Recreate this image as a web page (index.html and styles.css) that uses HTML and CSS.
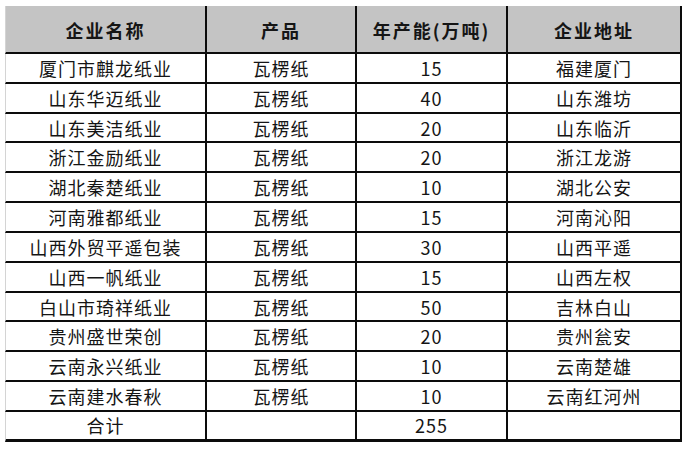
FILE: index.html
```html
<!DOCTYPE html>
<html lang="zh-CN">
<head>
<meta charset="utf-8">
<link rel="stylesheet" href="styles.css">
</head>
<body>
<table class="sheet">
  <colgroup>
    <col class="c1"><col class="c2"><col class="c3"><col class="c4">
  </colgroup>
  <thead>
    <tr class="head">
      <th>企业名称</th><th>产品</th><th>年产能(万吨)</th><th>企业地址</th>
    </tr>
  </thead>
  <tbody>
    <tr><td>厦门市麒龙纸业</td><td>瓦楞纸</td><td class="num">15</td><td>福建厦门</td></tr>
    <tr><td>山东华迈纸业</td><td>瓦楞纸</td><td class="num">40</td><td>山东潍坊</td></tr>
    <tr><td>山东美洁纸业</td><td>瓦楞纸</td><td class="num">20</td><td>山东临沂</td></tr>
    <tr><td>浙江金励纸业</td><td>瓦楞纸</td><td class="num">20</td><td>浙江龙游</td></tr>
    <tr><td>湖北秦楚纸业</td><td>瓦楞纸</td><td class="num">10</td><td>湖北公安</td></tr>
    <tr><td>河南雅都纸业</td><td>瓦楞纸</td><td class="num">15</td><td>河南沁阳</td></tr>
    <tr><td>山西外贸平遥包装</td><td>瓦楞纸</td><td class="num">30</td><td>山西平遥</td></tr>
    <tr><td>山西一帆纸业</td><td>瓦楞纸</td><td class="num">15</td><td>山西左权</td></tr>
    <tr><td>白山市琦祥纸业</td><td>瓦楞纸</td><td class="num">50</td><td>吉林白山</td></tr>
    <tr><td>贵州盛世荣创</td><td>瓦楞纸</td><td class="num">20</td><td>贵州瓮安</td></tr>
    <tr><td>云南永兴纸业</td><td>瓦楞纸</td><td class="num">10</td><td>云南楚雄</td></tr>
    <tr><td>云南建水春秋</td><td>瓦楞纸</td><td class="num">10</td><td>云南红河州</td></tr>
    <tr class="total"><td>合计</td><td></td><td class="num">255</td><td></td></tr>
  </tbody>
</table>
</body>
</html>
```

FILE: styles.css
```css
html, body {
  margin: 0;
  padding: 0;
  background: #ffffff;
}

body {
  padding: 6px 0 0 5px;
  font-family: "Noto Sans CJK SC", "Noto Sans", sans-serif;
  color: #151515;
}

.sheet {
  border-collapse: separate;
  border-spacing: 0;
  table-layout: fixed;
  width: 677px;
}

.c1 { width: 202px; }
.c2 { width: 150px; }
.c3 { width: 151px; }
.c4 { width: 174px; }

.sheet th,
.sheet td {
  box-sizing: border-box;
  padding: 0;
  text-align: center;
  vertical-align: middle;
  border-right: 2px solid #0c0c0c;
  border-bottom: 2px solid #0c0c0c;
  white-space: nowrap;
  overflow: hidden;
}

.sheet th:first-child,
.sheet td:first-child {
  border-left: 1px solid #d4d4d4;
}

.head th {
  height: 48px;
  background: #c4c4c4;
  font-size: 18px;
  font-weight: 700;
  letter-spacing: 2px;
  line-height: 20px;
  padding-top: 1px;
}

.sheet td {
  height: 29.83px;
  font-size: 18px;
  line-height: 20px;
  letter-spacing: 1px;
  font-weight: 400;
}

.sheet td.num {
  font-size: 18px;
  letter-spacing: 1px;
}

.total td {
  height: 30px;
  border-bottom-width: 3px;
}
```
